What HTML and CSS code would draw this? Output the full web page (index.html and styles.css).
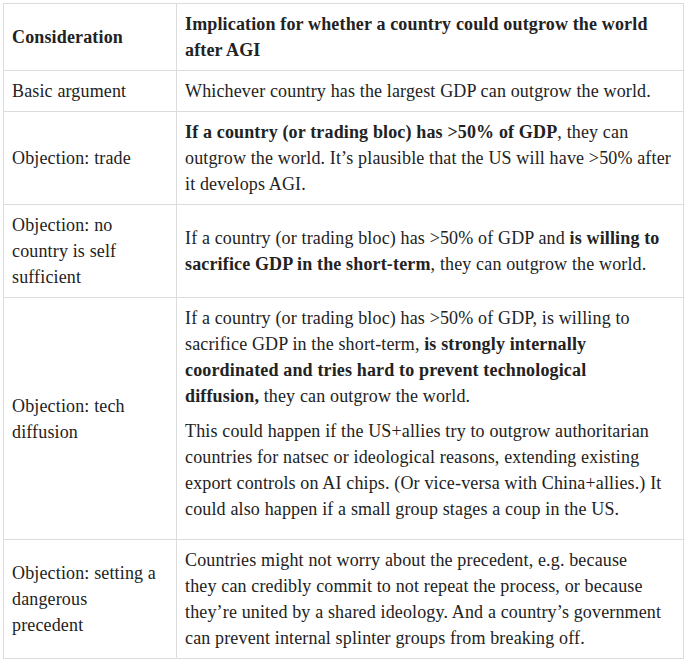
FILE: index.html
```html
<!DOCTYPE html>
<html>
<head>
<meta charset="utf-8">
<link rel="stylesheet" href="styles.css">
</head>
<body>
<table class="tbl">
  <colgroup><col class="c1"><col class="c2"></colgroup>
  <thead>
    <tr><th>Consideration</th><th>Implication for whether a country could outgrow the world after AGI</th></tr>
  </thead>
  <tbody>
    <tr><td>Basic argument</td><td><p>Whichever country has the largest GDP can outgrow the world.</p></td></tr>
    <tr><td>Objection: trade</td><td><p><strong>If a country (or trading bloc) has &gt;50% of GDP</strong>, they can outgrow the world. It’s plausible that the US will have &gt;50% after it develops AGI.</p></td></tr>
    <tr><td>Objection: no country is self sufficient</td><td><p>If a country (or trading bloc) has &gt;50% of GDP and <strong>is willing to sacrifice GDP in the short-term</strong>, they can outgrow the world.</p></td></tr>
    <tr><td>Objection: tech diffusion</td><td><p>If a country (or trading bloc) has &gt;50% of GDP, is willing to sacrifice GDP in the short-term, <strong>is strongly internally coordinated and tries hard to prevent technological<br>diffusion,</strong> they can outgrow the world.</p><p>This could happen if the US+allies try to outgrow authoritarian countries for natsec or ideological reasons, extending existing export controls on AI chips. (Or vice-versa with China+allies.) It could also happen if a small group stages a coup in the US.</p></td></tr>
    <tr><td>Objection: setting a<br>dangerous<br>precedent</td><td><p>Countries might not worry about the precedent, e.g. because<br>they can credibly commit to not repeat the process, or because<br>they’re united by a shared ideology. And a country’s government<br>can prevent internal splinter groups from breaking off.</p></td></tr>
  </tbody>
</table>
</body>
</html>
```
FILE: styles.css
```css
html, body { background: #fff; }
body { margin: 3px; font-family: "Liberation Serif", "Times New Roman", serif; font-size: 18px; letter-spacing: 0.15px; line-height: 26px; color: #222; }
.tbl { border-collapse: collapse; width: 681px; table-layout: fixed; }
.c1 { width: 173px; }
.tbl th, .tbl td { border: 1px solid #dcdcdc; padding: 7px 8px; text-align: left; vertical-align: middle; }
.tbl th { font-weight: bold; }
.tbl p { margin: 0; }
.tbl p + p { margin-top: 9px; margin-bottom: 10px; }
strong { font-weight: bold; }
```
